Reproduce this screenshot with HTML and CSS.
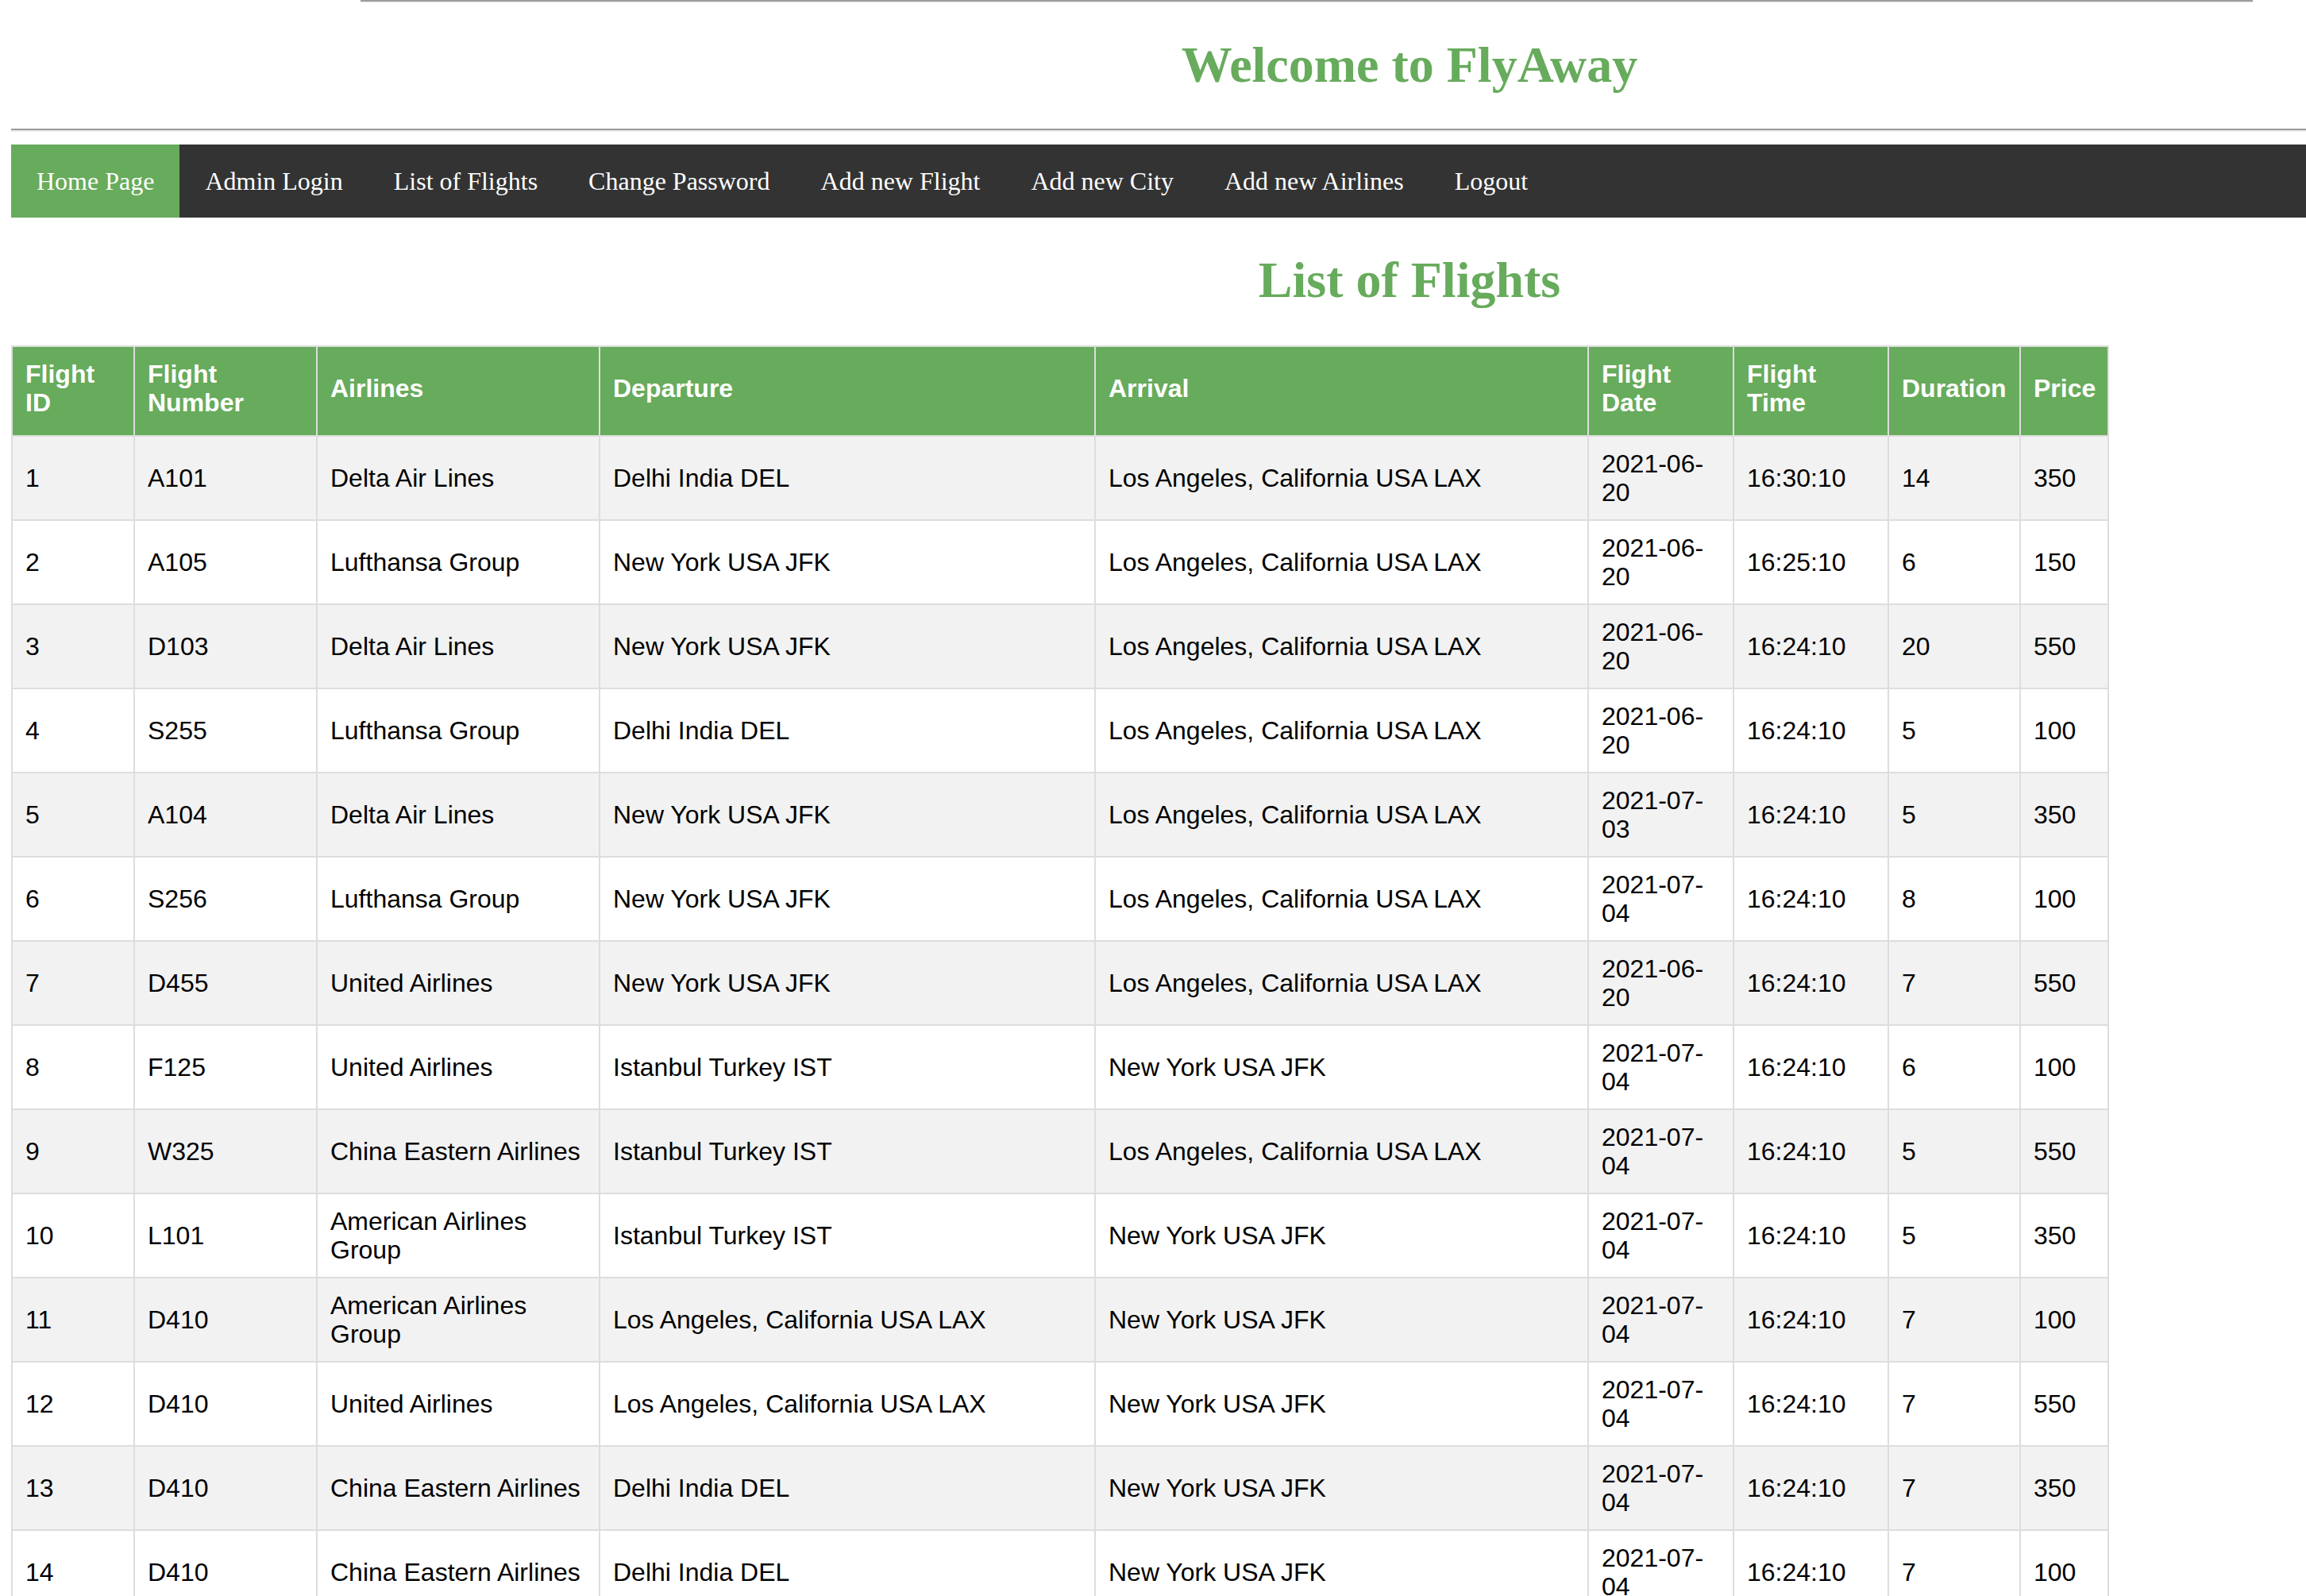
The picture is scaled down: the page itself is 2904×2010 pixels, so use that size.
FILE: index.html
```html
<!DOCTYPE html>
<html lang="en">
<head>
<meta charset="utf-8">
<title>FlyAway - List of Flights</title>
<link rel="stylesheet" href="styles.css">
</head>
<body>
<div class="topline"></div>
<h1 class="page-title welcome">Welcome to FlyAway</h1>
<hr class="divider">
<nav class="topnav">
  <a class="nav-link active" href="#">Home Page</a>
  <a class="nav-link" href="#">Admin Login</a>
  <a class="nav-link" href="#">List of Flights</a>
  <a class="nav-link" href="#">Change Password</a>
  <a class="nav-link" href="#">Add new Flight</a>
  <a class="nav-link" href="#">Add new City</a>
  <a class="nav-link" href="#">Add new Airlines</a>
  <a class="nav-link" href="#">Logout</a>
</nav>
<h1 class="page-title list-title">List of Flights</h1>
<table class="flights">
  <colgroup>
    <col class="c-id"><col class="c-num"><col class="c-air"><col class="c-dep"><col class="c-arr"><col class="c-date"><col class="c-time"><col class="c-dur"><col class="c-price">
  </colgroup>
  <tr>
    <th>Flight ID</th><th>Flight Number</th><th>Airlines</th><th>Departure</th><th>Arrival</th><th>Flight Date</th><th>Flight Time</th><th>Duration</th><th>Price</th>
  </tr>
  <tr><td>1</td><td>A101</td><td>Delta Air Lines</td><td>Delhi India DEL</td><td>Los Angeles, California USA LAX</td><td>2021-06-<wbr>20</td><td>16:30:10</td><td>14</td><td>350</td></tr>
  <tr><td>2</td><td>A105</td><td>Lufthansa Group</td><td>New York USA JFK</td><td>Los Angeles, California USA LAX</td><td>2021-06-<wbr>20</td><td>16:25:10</td><td>6</td><td>150</td></tr>
  <tr><td>3</td><td>D103</td><td>Delta Air Lines</td><td>New York USA JFK</td><td>Los Angeles, California USA LAX</td><td>2021-06-<wbr>20</td><td>16:24:10</td><td>20</td><td>550</td></tr>
  <tr><td>4</td><td>S255</td><td>Lufthansa Group</td><td>Delhi India DEL</td><td>Los Angeles, California USA LAX</td><td>2021-06-<wbr>20</td><td>16:24:10</td><td>5</td><td>100</td></tr>
  <tr><td>5</td><td>A104</td><td>Delta Air Lines</td><td>New York USA JFK</td><td>Los Angeles, California USA LAX</td><td>2021-07-<wbr>03</td><td>16:24:10</td><td>5</td><td>350</td></tr>
  <tr><td>6</td><td>S256</td><td>Lufthansa Group</td><td>New York USA JFK</td><td>Los Angeles, California USA LAX</td><td>2021-07-<wbr>04</td><td>16:24:10</td><td>8</td><td>100</td></tr>
  <tr><td>7</td><td>D455</td><td>United Airlines</td><td>New York USA JFK</td><td>Los Angeles, California USA LAX</td><td>2021-06-<wbr>20</td><td>16:24:10</td><td>7</td><td>550</td></tr>
  <tr><td>8</td><td>F125</td><td>United Airlines</td><td>Istanbul Turkey IST</td><td>New York USA JFK</td><td>2021-07-<wbr>04</td><td>16:24:10</td><td>6</td><td>100</td></tr>
  <tr><td>9</td><td>W325</td><td>China Eastern Airlines</td><td>Istanbul Turkey IST</td><td>Los Angeles, California USA LAX</td><td>2021-07-<wbr>04</td><td>16:24:10</td><td>5</td><td>550</td></tr>
  <tr><td>10</td><td>L101</td><td>American Airlines Group</td><td>Istanbul Turkey IST</td><td>New York USA JFK</td><td>2021-07-<wbr>04</td><td>16:24:10</td><td>5</td><td>350</td></tr>
  <tr><td>11</td><td>D410</td><td>American Airlines Group</td><td>Los Angeles, California USA LAX</td><td>New York USA JFK</td><td>2021-07-<wbr>04</td><td>16:24:10</td><td>7</td><td>100</td></tr>
  <tr><td>12</td><td>D410</td><td>United Airlines</td><td>Los Angeles, California USA LAX</td><td>New York USA JFK</td><td>2021-07-<wbr>04</td><td>16:24:10</td><td>7</td><td>550</td></tr>
  <tr><td>13</td><td>D410</td><td>China Eastern Airlines</td><td>Delhi India DEL</td><td>New York USA JFK</td><td>2021-07-<wbr>04</td><td>16:24:10</td><td>7</td><td>350</td></tr>
  <tr><td>14</td><td>D410</td><td>China Eastern Airlines</td><td>Delhi India DEL</td><td>New York USA JFK</td><td>2021-07-<wbr>04</td><td>16:24:10</td><td>7</td><td>100</td></tr>
</table>
</body>
</html>
```
FILE: styles.css
```css
html {
  overflow: hidden;
  background: #fff;
}

body {
  margin: 0 0 0 14px;
  font-family: "Liberation Serif", "Times New Roman", serif;
  color: #000;
}

.topline {
  margin-left: 440px;
  width: 2383px;
  height: 0;
  border-top: 2px solid #9c9c9c;
  border-bottom: 1px solid #e4e4e4;
}

.page-title {
  font-family: "Liberation Serif", "Times New Roman", serif;
  font-size: 64px;
  font-weight: bold;
  color: #67ab5c;
  text-align: center;
  padding-left: 632px;
  line-height: 71px;
}

.welcome {
  margin: 43px 0 45px;
}

.list-title {
  margin: 43px 0 47px;
}

.divider {
  margin: 0 0 16px;
  height: 0;
  border: 0;
  border-top: 2px solid #999;
  border-bottom: 2px solid #ececec;
}

.topnav {
  display: flex;
  background: #333;
}

.nav-link {
  display: block;
  padding: 28px 32px;
  font-size: 32px;
  line-height: 36px;
  color: #fff;
  text-decoration: none;
}

.nav-link.active {
  background: #67ab5c;
}

.flights {
  border-collapse: collapse;
  table-layout: fixed;
  width: 2642px;
  font-family: "Liberation Sans", Arial, sans-serif;
  font-size: 32px;
  line-height: 36px;
}

.c-id { width: 154px; }
.c-num { width: 230px; }
.c-air { width: 356px; }
.c-dep { width: 624px; }
.c-arr { width: 621px; }
.c-date { width: 183px; }
.c-time { width: 195px; }
.c-dur { width: 166px; }
.c-price { width: 111px; }

.flights th,
.flights td {
  border: 2px solid #ddd;
  text-align: left;
}

.flights th {
  padding: 16px 16px 23px;
  background: #67ab5c;
  color: #fff;
  font-weight: bold;
}

.flights td {
  padding: 16px;
  color: #000;
}

.flights tr:nth-child(even) {
  background: #f2f2f2;
}
```
